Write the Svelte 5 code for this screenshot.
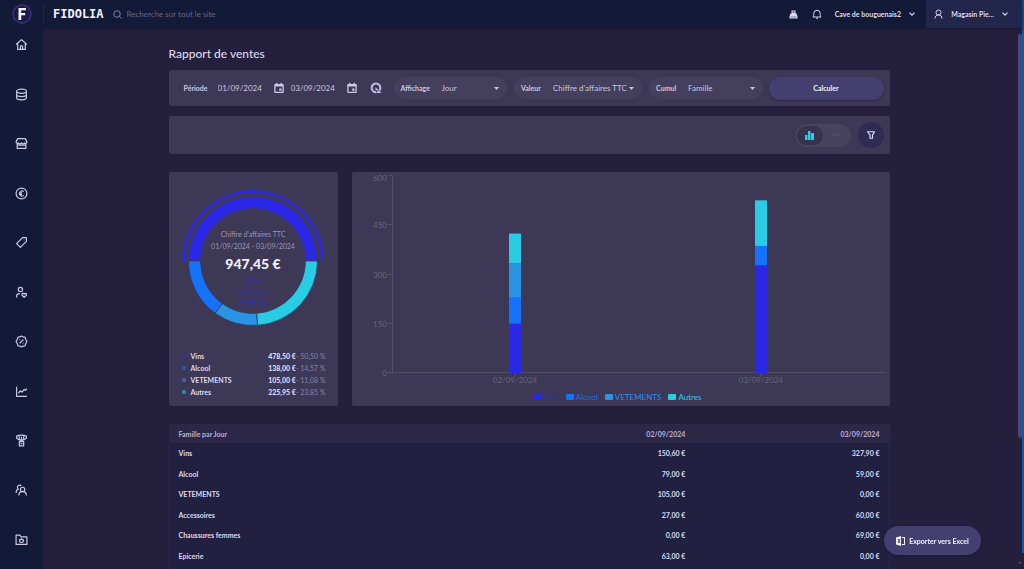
<script>
  const nav = [
    { label: 'Accueil', d: 'M2 12 12 3l10 9M5 10v11h14V10M10 21v-5a2 2 0 0 1 4 0v5' },
    { label: 'Catalogue', d: 'M3 6c0-5 18-5 18 0s-18 5-18 0v12c0 5 18 5 18 0V6M3 12c0 5 18 5 18 0' },
    { label: 'Boutique', d: 'M5 3h14l3 6c0 3-3 3-4 2-2 2-4 2-6 0-2 2-4 2-6 0-1 1-4 1-4-2zM4 12v9h16v-9M4 15h16' },
    { label: 'Ventes', d: 'M22 12a10 10 0 1 1-20 0 10 10 0 0 1 20 0M16 8.500c-3-3-7-1-7 3.500s4 6.500 7 3.500M7 11h6M7 13.500h6' },
    { label: 'Promotions', d: 'M14 3h7v7L10 21l-7-7zM16.500 7v1' },
    { label: 'Fidélité', d: 'M14 6.500a4 4 0 1 1-8 0 4 4 0 0 1 8 0M3 21v-3c0-3 3-4 6-4M17 21l-4-4c-1-4 3-4 4-2 1-2 5-2 4 2z' },
    { label: 'Remises', d: 'M12 2l3 1.500 3.500.5 1 3.500L22 12l-2.500 4.500-1 3.500-3.500.5L12 22l-3-1.500L5.500 20l-1-3.500L2 12l2.500-4.500 1-3.500L9 3.500zM15.500 8.500l-7 7M9 8.500v1M15 14.500v1' },
    { label: 'Rapports', d: 'M3 3v18h19M6 15l4-4 3 2 4-5 2 2 3-3' },
    { label: 'Concours', d: 'M3 4c5-2 13-2 18 0v4l-5 3H8L3 8zM8 4v6l4 3 4-3V4M12 5v9M8 14h8v8H8zM10 18h4' },
    { label: 'Clients', d: 'M18 10a4 4 0 1 1-8 0 4 4 0 0 1 8 0M7 21c0-9 14-9 14 0M12 3C7 0 2 5 6 9.500c-3 1-4 3-4 7' },
    { label: 'Paramètres', d: 'M2 4h7l2 3h11v14H2zM12 10.500l1.200 1.500h2l-.2 2 1 1-2 2-2 .5-2-.5-2-2 1-1-.2-2h2z' }
  ];

  const shares = [
    { name: 'Vins', amount: '478,50 €', pct: '50,50 %', color: '#2b27e6', from: 180, to: 360 },
    { name: 'Alcool', amount: '138,00 €', pct: '14,57 %', color: '#1472fb', from: 125.8, to: 180 },
    { name: 'VETEMENTS', amount: '105,00 €', pct: '11,08 %', color: '#2993e4', from: 85.9, to: 125.8 },
    { name: 'Autres', amount: '225,95 €', pct: '23,85 %', color: '#28cce4', from: 0, to: 85.9 }
  ];

  const rows = [
    ['Vins', '150,60 €', '327,90 €'],
    ['Alcool', '79,00 €', '59,00 €'],
    ['VETEMENTS', '105,00 €', '0,00 €'],
    ['Accessoires', '27,00 €', '60,00 €'],
    ['Chaussures femmes', '0,00 €', '69,00 €'],
    ['Epicerie', '63,00 €', '0,00 €']
  ];

  const days = [
    { label: '02/09/2024', x: 163, values: [150.6, 79, 105, 90] },
    { label: '03/09/2024', x: 409, values: [327.9, 59, 0, 139] }
  ];
  const zero = 201;
  const unit = 197 / 600;
  const ticks = [0, 150, 300, 450, 600];

  const bars = days.flatMap((day) => {
    let sum = 0;
    return day.values.map((v, i) => {
      sum += v;
      return { x: day.x - 6, y: zero - sum * unit, h: v * unit, color: shares[i].color };
    });
  });

  function point(r, deg) {
    const a = (deg * Math.PI) / 180;
    return `${(r * Math.cos(a)).toFixed(2)} ${(r * Math.sin(a)).toFixed(2)}`;
  }
  function ring(r1, r2, from, to) {
    const big = to - from > 180 ? 1 : 0;
    return `M${point(r2, from)}A${r2} ${r2} 0 ${big} 1 ${point(r2, to)}L${point(r1, to)}A${r1} ${r1} 0 ${big} 0 ${point(r1, from)}Z`;
  }

  const filters = [
    { id: 'affichage', label: 'Affichage', options: ['Jour', 'Semaine', 'Mois'] },
    { id: 'valeur', label: 'Valeur', options: ["Chiffre d'affaires TTC", "Chiffre d'affaires HT"], wide: true },
    { id: 'cumul', label: 'Cumul', options: ['Famille', 'Article'] }
  ];
</script>

{#snippet calendar()}
  <svg width="10" height="10" viewBox="0 0 20 20" aria-hidden="true">
    <path d="M4 0h3v2h6V0h3v2h1.500a2 2 0 0 1 2 2v14a2 2 0 0 1-2 2h-15a2 2 0 0 1-2-2V4a2 2 0 0 1 2-2H4zM3 7v10.500h14V7zM10.500 11H15v4.500h-4.500z" fill="currentColor" fill-rule="evenodd" />
  </svg>
{/snippet}

{#snippet chevron()}
  <svg width="6" height="4" viewBox="0 0 6 4" aria-hidden="true"><path d="M.5.7 3 3.200 5.500.7" fill="none" stroke="currentColor" stroke-width="1.100" /></svg>
{/snippet}

<div class="shell">
  <header>
    <a class="logo" href="#accueil" aria-label="Fidolia">
      <svg width="20" height="20" viewBox="0 0 20 20" aria-hidden="true">
        <circle cx="10" cy="10" r="9" fill="#1c1a45" stroke="#40318a" stroke-width="1.300" />
        <path d="M6.500 4h7.500v2.300H9.200v2.700h4v2.300h-4V16H6.500z" fill="#f3f1ff" />
      </svg>
    </a>
    <span class="brand">FIDOLIA</span>
    <label class="search">
      <svg width="9" height="9" viewBox="0 0 18 18" aria-hidden="true"><circle cx="8" cy="8" r="6.500" /><path d="m13 13 4 4" /></svg>
      <input type="search" aria-label="Recherche" placeholder="Recherche sur tout le site" />
    </label>
    <button class="plain" aria-label="Caisse">
      <svg width="9" height="9" viewBox="0 0 18 18" aria-hidden="true"><path d="M5 1h8v6h2l2 6v4H1v-4l2-6h2zM7 3v2h4V3zM3.500 13.500v1h11v-1z" fill="currentColor" fill-rule="evenodd" /></svg>
    </button>
    <button class="plain bell" aria-label="Notifications">
      <svg width="10" height="10" viewBox="0 0 20 20" fill="none" stroke="currentColor" stroke-width="2" aria-hidden="true"><path d="M2 16c1.500-2 1.500-4 1.500-7a6.500 6.500 0 0 1 13 0c0 3 0 5 1.500 7zM8 18.500h4" /></svg>
    </button>
    <button class="plain shop">Cave de bouguenais2 {@render chevron()}</button>
    <button class="plain user">
      <svg width="9" height="10" viewBox="0 0 18 20" fill="none" stroke="currentColor" stroke-width="2" aria-hidden="true"><circle cx="9" cy="7" r="5" /><path d="M2 19c0-4 2-7 7-7s7 3 7 7" /></svg>
      <span>Magasin Pie...</span>
      {@render chevron()}
    </button>
  </header>

  <nav>
    {#each nav as item}
      <a href="#{item.label}" aria-label={item.label}>
        <svg width="13" height="13" viewBox="0 0 24 24" aria-hidden="true"><path d={item.d} /></svg>
      </a>
    {/each}
  </nav>

  <main>
    <div class="content">
      <h1>Rapport de ventes</h1>

      <form class="card filters" onsubmit={(e) => e.preventDefault()}>
        <label class="caption" for="debut">Période</label>
        <input class="date" id="debut" value="01/09/2024" />
        <button type="button" class="plain" aria-label="Choisir la date de début">{@render calendar()}</button>
        <input class="date second" aria-label="Date de fin" value="03/09/2024" />
        <button type="button" class="plain" aria-label="Choisir la date de fin">{@render calendar()}</button>
        <button type="button" class="plain reload" aria-label="Actualiser">
          <svg width="12" height="12" viewBox="0 0 24 24" fill="none" stroke="currentColor" stroke-width="4" aria-hidden="true"><path d="M13 20.500A8.700 8.700 0 1 1 20.700 12c0 2-.6 3.400-1.500 4.600" /><path d="M11 10.500v6h7zM16 15l7 7h-9z" fill="currentColor" stroke="none" /></svg>
        </button>
        <div class="pills">
          {#each filters as f}
            <div class="pill" class:wide={f.wide}>
              <label class="caption" for={f.id}>{f.label}</label>
              <select id={f.id}>
                {#each f.options as o}<option>{o}</option>{/each}
              </select>
              <svg width="5" height="3" viewBox="0 0 5 3" aria-hidden="true"><path d="M0 0h5L2.500 3z" fill="currentColor" /></svg>
            </div>
          {/each}
        </div>
        <button class="submit">Calculer</button>
      </form>

      <div class="card tools">
        <div class="toggle">
          <button class="plain active" aria-label="Histogramme">
            <svg width="9" height="9" viewBox="0 0 9 9" aria-hidden="true"><path d="M0 4h2.500v5H0zM3 0h2.500v9H3zM6 2h3v7H6z" fill="#28cce4" /></svg>
          </button>
          <button class="plain" aria-label="Courbe">
            <svg width="10" height="6" viewBox="0 0 10 6" fill="none" stroke="#57506b" aria-hidden="true"><path d="m1 5 3-3 2 2 3-3M7 1h2v2" /></svg>
          </button>
        </div>
        <button class="plain funnel" aria-label="Filtrer">
          <svg width="8" height="8" viewBox="0 0 16 16" fill="none" stroke="currentColor" stroke-width="2.400" aria-hidden="true"><path d="M1 1.500h14l-4 6.500v6.500H6V8z" /></svg>
        </button>
      </div>

      <div class="charts">
        <section class="card summary">
          <div class="donut">
            <svg width="144" height="144" viewBox="-72 -72 144 144" aria-hidden="true">
              {#each shares as s}
                <path d={ring(52.5, 64.5, s.from, s.to)} fill={s.color} stroke="#3d3856" stroke-width="0.800" />
              {/each}
              <path d={ring(68, 71, 180, 360)} fill="#2b27e6" opacity="0.850" />
            </svg>
            <div class="center">
              <p>Chiffre d'affaires TTC</p>
              <p>01/09/2024 - 03/09/2024</p>
              <strong>947,45 €</strong>
              <span>Vins</span>
              <span>478,50 €</span>
              <span>50,50 %</span>
            </div>
          </div>
          <ul>
            {#each shares as s}
              <li><i style="background: {s.color}"></i><span>{s.name}</span><b>{s.amount}</b><em>- {s.pct}</em></li>
            {/each}
          </ul>
        </section>

        <section class="card plot">
          <svg viewBox="0 0 538 218" role="img" aria-label="Chiffre d'affaires par jour">
            <g stroke="#535066" fill="none">
              <path d="M40.500 3V200.500M36 200.500H533" />
              {#each ticks as t}<path d="M36 {Math.round(zero - t * unit) - 0.5}h5" />{/each}
              {#each days as d}<path d="M{d.x} 201v4" />{/each}
            </g>
            {#each ticks as t}
              <text x="35" y={Math.max(9, zero + 3 - t * unit)} text-anchor="end">{t}</text>
            {/each}
            {#each bars as b}<rect x={b.x} y={b.y} width="12" height={b.h} fill={b.color} />{/each}
            {#each days as d}<text x={d.x} y="211" text-anchor="middle">{d.label}</text>{/each}
          </svg>
          <div class="legend">
            {#each shares as s, i}
              <span class:dim={i === 0} style="color: {s.color}"><i></i><b>{s.name}</b></span>
            {/each}
          </div>
        </section>
      </div>

      <table>
        <thead>
          <tr><th>Famille par Jour</th><th>02/09/2024</th><th>03/09/2024</th></tr>
        </thead>
        <tbody>
          {#each rows as r}
            <tr>{#each r as c}<td>{c}</td>{/each}</tr>
          {/each}
        </tbody>
      </table>
    </div>
  </main>

  <div class="track"><div class="thumb"></div><span></span></div>
  <div class="edge"></div>

  <button class="export">
    <svg width="9" height="10" viewBox="0 0 18 20" aria-hidden="true"><path d="M0 3l10-3v20L0 17zM11.500 2H18v16h-6.500v-2H16V4h-4.500zM3 6l2 4-2 4h2l1-2.500L7 14h2l-2-4 2-4H7L6 8.500 5 6z" fill="currentColor" fill-rule="evenodd" /></svg>
    Exporter vers Excel
  </button>
</div>

<style>
  :global(body) {
    margin: 0;
    background: #231f3c;
  }
  * {
    box-sizing: border-box;
  }
  .shell {
    display: grid;
    grid-template: 28px minmax(0, 1fr) / 43px minmax(0, 1fr) 5px 2px;
    height: 100vh;
    overflow: hidden;
    font: 700 7px/12px Lato, sans-serif;
    color: #dedaf2;
  }
  button,
  input,
  select {
    font: inherit;
    color: inherit;
    border: 0;
    padding: 0;
    margin: 0;
    background: none;
  }
  svg {
    display: block;
    flex: none;
  }
  .plain {
    display: flex;
    align-items: center;
    justify-content: center;
  }
  header {
    grid-column: 1 / 4;
    display: flex;
    align-items: center;
    background: #131a37;
    box-shadow: 0 1px 3px #1b1835;
    z-index: 1;
  }
  .logo {
    width: 44px;
    padding-left: 12px;
    border-right: 1px solid #232746;
  }
  .brand {
    margin: 0 9px;
    font: 700 12px/16px "DejaVu Sans Mono", monospace;
    color: #f3f1ff;
  }
  .search {
    display: flex;
    align-items: center;
    gap: 5px;
    flex: 1;
  }
  .search svg {
    fill: none;
    stroke: #8482a3;
    stroke-width: 2;
  }
  .search input {
    flex: 1;
    outline: 0;
    font-size: 8px;
    font-weight: 400;
  }
  .search input::placeholder {
    color: #68678a;
    opacity: 1;
  }
  .bell {
    margin: 0 13px 0 14px;
  }
  .shop {
    gap: 8px;
    margin-right: 11px;
  }
  .user {
    height: 28px;
    width: 96px;
    padding-right: 6px;
    gap: 8px;
    background: #21264a;
  }
  nav {
    display: flex;
    flex-direction: column;
    justify-content: space-between;
    align-items: center;
    padding: 10px 0 23px;
    background: #131a37;
  }
  nav path {
    fill: none;
    stroke: #cbc9e4;
    stroke-width: 2.2;
    stroke-linejoin: round;
  }
  main {
    overflow: hidden;
    padding: 16px 26px 0 24px;
  }
  .content {
    max-width: 721px;
    margin: 0 auto;
  }
  h1 {
    margin: 0 0 6px;
    font-size: 12px;
    line-height: 20px;
    font-weight: 500;
  }
  .card {
    background: #3d3856;
    border-radius: 2px;
  }
  .filters {
    display: flex;
    align-items: center;
    height: 36px;
    padding: 0 6px 0 15px;
    margin-bottom: 10px;
    color: #cdc8e2;
  }
  .caption {
    font-size: 7px;
  }
  .filters > .caption {
    width: 34px;
  }
  .date,
  select {
    font-size: 8px;
    font-weight: 400;
    color: #cbc6dd;
  }
  .date {
    width: 56px;
  }
  .second {
    margin-left: 7px;
  }
  .reload {
    margin: 0 12px 0 13px;
    color: #c3bbe8;
  }
  .pills {
    display: flex;
    flex: 1;
    gap: 7px;
    margin-right: 6px;
  }
  .pill {
    flex: 113;
    min-width: 0;
    display: flex;
    align-items: center;
    height: 22px;
    padding: 0 8px 0 7px;
    border-radius: 11px;
    background: #443f5d;
  }
  .pill.wide {
    flex: 130;
  }
  .pill .caption {
    flex: none;
    width: 32px;
  }
  .pill:first-child .caption {
    width: 41px;
  }
  select {
    appearance: none;
    flex: 1;
    min-width: 0;
    outline: 0;
  }
  .submit {
    width: 115px;
    height: 23px;
    border-radius: 12px;
    background: #443f6e;
    color: #f3f1ff;
    box-shadow: 0 1px 2px #2c2846;
  }
  .tools {
    display: flex;
    justify-content: flex-end;
    align-items: center;
    gap: 7px;
    height: 38px;
    padding-right: 6px;
    margin-bottom: 18px;
  }
  .toggle {
    display: flex;
    padding: 2px;
    border-radius: 12px;
    background: #47425d;
  }
  .toggle button {
    width: 26px;
    height: 19px;
    border-radius: 10px;
  }
  .toggle .active {
    background: #37324f;
  }
  .funnel {
    width: 26px;
    height: 26px;
    border-radius: 50%;
    background: #302b55;
  }
  .charts {
    display: grid;
    grid-template-columns: 169px minmax(0, 1fr);
    gap: 14px;
    margin-bottom: 18px;
  }
  .summary {
    padding: 17px 12px 7px;
  }
  .donut {
    display: grid;
    justify-items: center;
  }
  .donut > * {
    grid-area: 1 / 1;
  }
  .center {
    padding-top: 39px;
    text-align: center;
  }
  .center p {
    margin: 0;
    font-weight: 400;
    line-height: 12px;
    color: #9b96b4;
  }
  .center strong {
    display: block;
    font-size: 14px;
    line-height: 24px;
    color: #f3f1ff;
  }
  .center span {
    display: block;
    font-size: 8px;
    line-height: 11px;
    font-weight: 400;
    color: #322db8;
  }
  ul {
    margin: 17px 0 0;
    padding: 0;
    list-style: none;
  }
  li {
    display: flex;
    align-items: center;
    height: 12px;
  }
  li i {
    width: 4px;
    height: 4px;
    margin: 0 5px 0 1px;
    border-radius: 50%;
    opacity: 0.6;
  }
  li span {
    flex: 1;
  }
  li em {
    font-style: normal;
    font-weight: 400;
    color: #8a85a4;
  }
  .plot {
    display: flex;
    flex-direction: column;
    padding-bottom: 2px;
  }
  .plot > svg {
    width: 100%;
  }
  .plot text {
    font-size: 8px;
    font-weight: 400;
    fill: #6a6779;
  }
  .legend {
    display: flex;
    justify-content: center;
    gap: 7px;
    padding-right: 6px;
    font-size: 8px;
    line-height: 14px;
  }
  .legend span {
    display: flex;
    align-items: center;
    gap: 2px;
  }
  .legend i {
    width: 8px;
    height: 6px;
    border-radius: 1px;
    background: currentColor;
  }
  .legend b {
    font-weight: 400;
  }
  .legend .dim b {
    opacity: 0.6;
  }
  table {
    width: 100%;
    table-layout: fixed;
    border-collapse: separate;
    border-spacing: 0;
    border: 1px solid #2d2848;
    background: #222040;
  }
  th,
  td {
    height: 20px;
    padding: 0 9px;
    text-align: right;
  }
  th {
    height: 18px;
    background: #2c2746;
    color: #b9afd8;
  }
  th:first-child,
  td:first-child {
    width: 45%;
    text-align: left;
  }
  th:last-child {
    width: 27%;
  }
  tbody tr:nth-child(even) td {
    height: 21px;
  }
  tbody tr:last-child td {
    height: 25px;
    padding-bottom: 4px;
  }
  .track {
    display: flex;
    flex-direction: column;
    justify-content: space-between;
    align-items: center;
    padding: 6px 0 3px;
  }
  .thumb {
    width: 4px;
    height: 76%;
    border-radius: 2px;
    background: #4b467a;
  }
  .track span {
    border: 2px solid transparent;
    border-top-color: #57536f;
  }
  .edge {
    grid-area: 1 / 4 / 3 / 5;
    margin-bottom: 16px;
    background: #0a5ca6;
  }
  .export {
    position: fixed;
    right: 43px;
    bottom: 14px;
    z-index: 2;
    display: flex;
    align-items: center;
    justify-content: center;
    gap: 4px;
    width: 97px;
    height: 29px;
    border-radius: 15px;
    background: #443f6e;
    color: #f3f1ff;
    box-shadow: 0 1px 3px #1b1835;
  }
</style>
